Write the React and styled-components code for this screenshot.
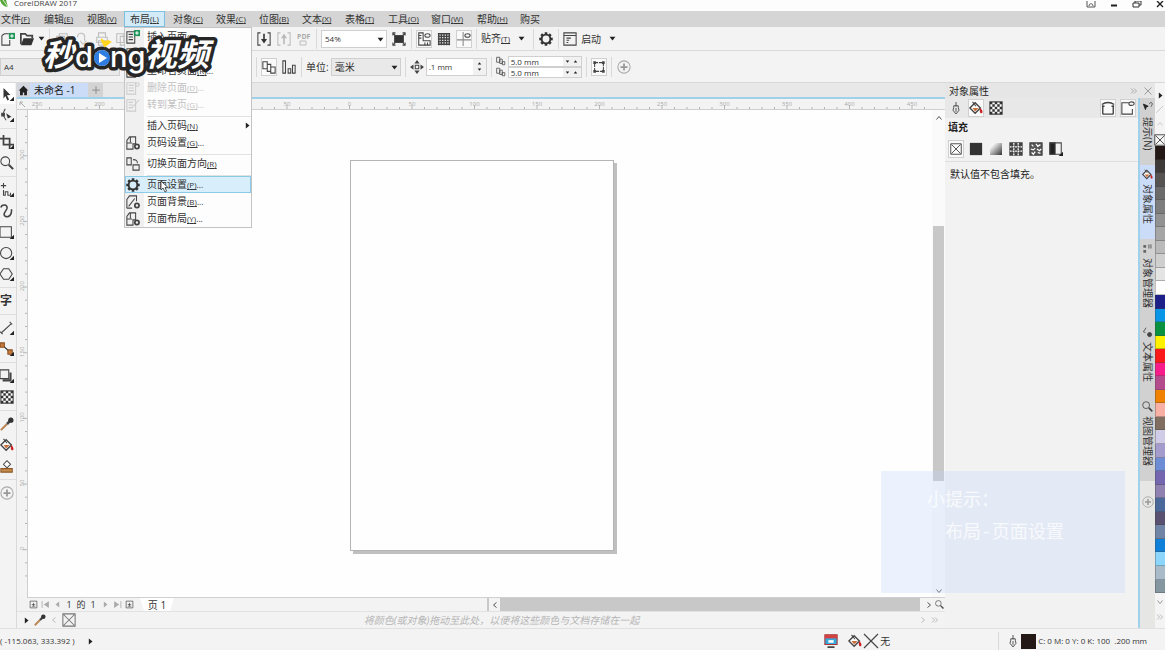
import React from 'react';
import styled, { createGlobalStyle, css } from 'styled-components';

const GlobalStyle = createGlobalStyle`
  *, *::before, *::after { box-sizing: border-box; }
  html, body { margin: 0; padding: 0; }
  body {
    font-family: "Open Sans", "Noto Sans CJK SC", sans-serif;
    font-size: 10px;
    line-height: 14px;
    color: #333;
    background: #f2f2f2;
    overflow: hidden;
  }
  button, input, select { font: inherit; color: inherit; margin: 0; padding: 0; border: 0; background: none; border-radius: 0; }
  svg { display: block; flex: none; }
`;

const line = '#d9d9d9';
const blue = '#9fd2ea';

const Window = styled.div`
  position: relative;
  display: flex;
  flex-direction: column;
  height: 100vh;
  min-height: 600px;
  white-space: nowrap;
  overflow: hidden;
`;

/* ---------- title ---------- */
const TitleBar = styled.header`
  display: flex;
  align-items: flex-start;
  height: 11px;
  background: #fdfdfd;
  overflow: hidden;
`;
const Title = styled.h1`
  margin: 0 auto 0 4px;
  font-size: 8px;
  line-height: 6px;
  font-weight: 400;
  color: #444;
`;
const WindowButtons = styled.div`
  display: flex;
  gap: 13px;
`;
const WindowButton = styled.button`
  width: 10px;
  height: 8px;
`;

/* ---------- menu bar ---------- */
const MenuBar = styled.nav`
  display: flex;
  gap: 2px;
  height: 16px;
  margin-left: -5px;
  background: #d5d5d5;
`;
const MenuSlot = styled.div`
  position: relative;
  flex: none;
  width: ${p => (p.$wide ? 44 : 41)}px;
`;
const MenuButton = styled.button`
  display: flex;
  align-items: center;
  width: 100%;
  height: 16px;
  padding-left: 5px;
  border: 1px solid ${p => (p.$open ? '#7dbfe0' : 'transparent')};
  background: ${p => (p.$open ? '#d3ebf8' : 'transparent')};
`;
const Key = styled.span`
  font-size: 8px;
  text-decoration: underline;
`;
const Dropdown = styled.div`
  position: absolute;
  z-index: 5;
  top: 16px;
  left: 0;
  width: 128px;
  border: 1px solid #c4c4c4;
  background: linear-gradient(90deg, #f0f0f0 19px, #fdfdfd 19px);
`;
const DropItem = styled.button`
  position: relative;
  display: flex;
  align-items: center;
  width: 100%;
  height: 17px;
  gap: 7px;
  padding-left: 1px;
  text-align: left;
  color: ${p => (p.$off ? '#c2c2c2' : '#333')};
  ${p => p.$on && css`background: #d9eefb; box-shadow: inset 0 0 0 1px #8ccbe8;`}
`;
const DropLabel = styled.span`
  flex: 1;
`;
const DropRule = styled.div`
  height: 4px;
  margin-left: 22px;
  border-bottom: 1px solid #e2e2e2;
`;
const Cursor = styled.svg`
  position: absolute;
  left: 35px;
  top: 4px;
`;

/* ---------- toolbars ---------- */
const Toolbar = styled.div`
  display: flex;
  align-items: center;
  gap: 4px;
  height: ${p => p.$h}px;
  background: #f3f3f3;
  border-bottom: 1px solid ${line};
`;
const LeadGroup = styled.div`
  display: flex;
  align-items: center;
  flex: none;
  gap: 4px;
  width: 252px;
  height: 100%;
  border-right: 1px solid ${line};
`;
const ToolButton = styled.button`
  display: flex;
  align-items: center;
  justify-content: center;
  flex: none;
  gap: 4px;
  min-width: 16px;
  height: 18px;
  opacity: ${p => (p.$off ? 0.3 : 1)};
  ${p => p.$on && css`background: #fafafa; box-shadow: inset 0 0 0 1px #d0d0d0;`}
`;
const MenuTool = styled(ToolButton)`
  padding-right: 4px;
  svg:last-child { margin-left: 4px; }
`;
const Rule = styled.span`
  flex: none;
  width: 1px;
  height: 20px;
  background: ${line};
`;
const SelectBox = styled.span`
  position: relative;
  flex: none;
  width: ${p => p.$w}px;
  height: 18px;
  select {
    appearance: none;
    width: 100%;
    height: 18px;
    padding-left: 3px;
    border: 1px solid #cfcfcf;
    font-size: ${p => (p.$small ? 8 : 10)}px;
    background: ${p => (p.$white ? '#fff' : '#e9e9e9')};
  }
  svg { position: absolute; right: 3px; top: 7px; pointer-events: none; }
`;
const Field = styled.label`
  display: flex;
  align-items: center;
  gap: 2px;
`;
const Spin = styled.span`
  display: flex;
  height: ${p => (p.$thin ? 11 : 18)}px;
  border: 1px solid #d0d0d0;
  background: #f1f1f1;
  input {
    width: ${p => (p.$thin ? 54 : 46)}px;
    height: 100%;
    padding-left: 2px;
    font-size: 8px;
    background: #fff;
  }
`;
const Arrows = styled.span`
  display: flex;
  flex-direction: ${p => (p.$row ? 'row' : 'column')};
  align-items: center;
  justify-content: space-evenly;
  width: ${p => (p.$row ? 18 : 13)}px;
`;
const Stack = styled.div`
  display: flex;
  flex-direction: column;
`;

/* ---------- work area ---------- */
const Main = styled.main`
  display: flex;
  flex: 1;
  min-height: 0;
`;
const Toolbox = styled.aside`
  flex: none;
  width: 17px;
  background: #f3f3f3;
  border-right: 1px solid ${line};
`;
const ToolGroup = styled.div`
  display: flex;
  flex-direction: column;
  & + & { margin-top: 3px; padding-top: 2px; border-top: 1px solid #dedede; }
`;
const Tool = styled.button`
  display: flex;
  align-items: center;
  width: 15px;
  height: 21px;
  background: ${p => (p.$on ? '#fff' : 'transparent')};
  b { font-size: 12px; }
`;
const Doc = styled.section`
  display: flex;
  flex-direction: column;
  flex: 1;
  min-width: 0;
`;
const DocTabs = styled.div`
  display: flex;
  height: 16px;
  background: #e8e8e8;
  border-bottom: 2px solid ${blue};
`;
const DocTab = styled.button`
  display: flex;
  align-items: center;
  justify-content: center;
  width: ${p => p.$w}px;
  height: 14px;
  color: #222;
  background: ${p => p.$bg};
  span { flex: 1; padding-left: 4px; text-align: left; }
`;
const RulerTop = styled.div`
  display: flex;
  height: 11px;
  overflow: hidden;
  background: #f3f3f3;
  border-bottom: 1px solid #cfcfcf;
`;
const Middle = styled.div`
  display: flex;
  flex: 1;
  min-height: 0;
`;
const RulerSide = styled.div`
  flex: none;
  width: 11px;
  overflow: hidden;
  background: #f3f3f3;
  border-right: 1px solid #cfcfcf;
`;
const Canvas = styled.div`
  display: flex;
  align-items: center;
  justify-content: center;
  flex: 1;
  padding: 2px 0 0 3px;
  background: #fefefe;
`;
const Paper = styled.div`
  width: 264px;
  height: 391px;
  background: #fefefe;
  border: 1px solid #b4b4b4;
  box-shadow: 3px 3px 0 #c0c0c0;
`;
const ScrollSide = styled.div`
  display: flex;
  flex-direction: column;
  align-items: center;
  flex: none;
  width: 13px;
  padding: 2px 1px;
  background: #fafafa;
`;
const ScrollButton = styled.button`
  display: flex;
  align-items: center;
  justify-content: center;
  flex: none;
  width: 11px;
  height: 11px;
`;
const Gap = styled.span`
  flex: ${p => p.$grow};
`;
const Thumb = styled.span`
  flex: ${p => p.$grow};
  align-self: stretch;
  background: #c8c8c8;
`;
const PageNav = styled.div`
  display: flex;
  flex: none;
  align-items: center;
  height: 13px;
  margin-left: 11px;
  background: #f3f3f3;
  box-shadow: 0 -1px 0 #d0d0d0;
`;
const NavGroup = styled.div`
  display: flex;
  align-items: center;
  gap: 2px;
  width: 461px;
  height: 100%;
  border-right: 2px solid #c9c9c9;
  font-size: 9px;
`;
const NavButton = styled.button`
  display: flex;
  justify-content: center;
  width: 10px;
`;
const NavNumber = styled.span`
  width: 10px;
  text-align: center;
`;
const PageTab = styled.button`
  display: flex;
  align-items: center;
  justify-content: center;
  width: 34px;
  height: 13px;
  margin-left: 4px;
  font-size: 10px;
  background: #fff;
  clip-path: polygon(0 0, 100% 0, 88% 100%, 12% 100%);
`;
const ColorHint = styled.div`
  display: flex;
  flex: none;
  align-items: center;
  gap: 4px;
  height: 17px;
  padding: 0 6px;
  border-top: 1px solid #e2e2e2;
  background: #f3f3f3;
`;
const HintText = styled.p`
  flex: 1;
  margin: 0;
  padding-left: 8px;
  text-align: center;
  font-style: italic;
  color: #b5b5b5;
`;

/* ---------- docker ---------- */
const Docker = styled.aside`
  display: flex;
  flex-direction: column;
  flex: none;
  width: 210px;
  background: #f2f2f2;
`;
const DockerTitle = styled.header`
  display: flex;
  align-items: center;
  gap: 6px;
  height: 15px;
  padding: 0 3px 0 4px;
  background: #e6e6e6;
  h2 { flex: 1; margin: 0; font-size: 10px; font-weight: 400; color: #222; }
`;
const DockerBody = styled.div`
  display: flex;
  flex: 1;
  min-height: 0;
`;
const Panel = styled.div`
  flex: 1;
  border-right: 2px solid ${blue};
`;
const PanelTools = styled.div`
  display: flex;
  align-items: center;
  gap: 4px;
  height: 20px;
  padding: 0 2px 0 3px;
  background: #e8e8e8;
`;
const PanelSection = styled.div`
  display: flex;
  flex-direction: column;
  gap: 5px;
  padding: 1px 3px 3px;
  border-bottom: 1px solid #dedede;
  h3 { margin: 0; font-size: 10px; line-height: 16px; color: #222; }
`;
const Fills = styled.div`
  display: flex;
  gap: 4px;
`;
const PanelText = styled.p`
  margin: 5px;
  color: #222;
`;
const SideTabs = styled.div`
  flex: none;
  width: 15px;
  background: #e6e6e4;
`;
const SideTab = styled.button`
  display: flex;
  flex-direction: column;
  align-items: center;
  width: 15px;
  gap: 4px;
  padding: 4px 0 15px;
  background: ${p => (p.$on ? '#cbdcf8' : '#d1d1d1')};
  span { writing-mode: vertical-rl; text-orientation: sideways; line-height: 15px; color: #333; }
`;
const AddTab = styled.button`
  display: flex;
  align-items: center;
  justify-content: center;
  width: 15px;
  height: 42px;
`;

/* ---------- colour palette ---------- */
const Palette = styled.aside`
  display: flex;
  flex-direction: column;
  flex: none;
  width: 10px;
  background: #f4f4f4;
`;
const PaletteHead = styled.div`
  display: flex;
  flex-direction: column;
  align-items: center;
  justify-content: space-between;
  flex: none;
  height: ${p => p.$h}px;
  padding: ${p => p.$pad}px 0 0;
`;
const Swatch = styled.button`
  flex: 1;
  min-height: 0;
  border: solid rgba(70, 70, 70, 0.35);
  border-width: 0 0 1px 1px;
  background: ${p => p.$c};
`;

/* ---------- status ---------- */
const StatusBar = styled.footer`
  display: flex;
  align-items: center;
  flex: none;
  height: 22px;
  padding: 3px 18px 0 0;
  border-top: 1px solid #e0e0e0;
  background: #f3f3f3;
  font-size: 8px;
`;
const Coordinates = styled.div`
  display: flex;
  align-items: center;
  gap: 12px;
  flex: 1;
`;
const FillStatus = styled.div`
  display: flex;
  align-items: center;
  gap: 1px;
  width: 175px;
  height: 18px;
  font-size: 10px;
  border-right: 1px solid ${line};
`;
const OutlineStatus = styled.div`
  display: flex;
  align-items: center;
  gap: 2px;
  padding-left: 8px;
`;
const InkBox = styled.span`
  width: 15px;
  height: 15px;
  background: #231815;
`;

/* ---------- overlays ---------- */
const Brand = styled.svg`
  position: absolute;
  z-index: 8;
  left: 36px;
  top: 32px;
`;
const Tip = styled.aside`
  position: absolute;
  z-index: 7;
  right: 40px;
  bottom: 57px;
  width: 244px;
  height: 122px;
  padding: 14px 0 0 46px;
  font-family: "Liberation Mono", "Noto Sans CJK SC", monospace;
  font-size: 18px;
  line-height: 32px;
  color: rgba(255, 255, 255, 0.75);
  background: rgba(195, 215, 252, 0.3);
  p { margin: 0; }
  p + p { padding-left: 18px; }
`;

/* ---------- drawings ---------- */
const G = ({ s = 14, children, c = '#444', w = 1.2 }) => (
  <svg width={s} height={s} viewBox="0 0 16 16" fill="none" stroke={c} strokeWidth={w} aria-hidden="true">
    {children}
  </svg>
);
const Down = ({ s = 7, r = 0, c = '#222' }) => (
  <svg width={s} height={s - 2} viewBox="0 0 8 6" aria-hidden="true" overflow="visible">
    <path d="M0.5 1h7L4 5.4z" fill={c} transform={`rotate(${r} 4 3)`} />
  </svg>
);
const Chev = ({ r = 0, c = '#555', double, s = 8 }) => (
  <G s={s} c={c} w={2}>
    <g transform={`rotate(${r} 8 8)`}>
      {double ? <path d="M2 3l5 5-5 5M8 3l5 5-5 5" /> : <path d="M5 3l6 5-6 5" />}
    </g>
  </G>
);
const Corner = () => <path d="M16 11v5h-5z" fill="#222" stroke="none" />;
const gearSpokes = [0, 45, 90, 135, 180, 225, 270, 315];
const checks = [0, 1, 2, 3, 4].flatMap(y => [0, 1, 2, 3, 4].filter(x => (x + y) % 2 === 0).map(x => `M${1 + x * 2.8} ${1 + y * 2.8}h2.8v2.8h-2.8z`)).join('');

const shapes = {
  newDoc: <><path d="M1 4l3-2h5M1 4v11h9V9" /><path d="M9 1h7v7H9z" fill="#22965a" stroke="none" /><path d="M12.5 2.5v4M10.5 4.5h4" stroke="#fff" /></>,
  folder: <><path d="M1 14V2h5l2 2h6v3" strokeWidth="2" /><path d="M1 15l3-8h12l-3 8z" fill="#333" stroke="none" /></>,
  save: <path d="M2 5h9v9H2zM5 5V2h9v9h-3M4 9h5" />,
  cloud: <path d="M3 6a4 4 0 018-1v5M6 10l3 4 4-4" />,
  print: <path d="M4 6V1h8v5M2 6h12v6H2zM4 10h8v5H4z" />,
  copy: <path d="M2 2h8v10H2zM6 5h8v10H6z" />,
  importFile: <><path d="M4 1H1v14h3M12 1h3v14h-3" /><path d="M8 2v8" strokeWidth="2" /><path d="M4.5 8h7L8 13z" fill="#333" stroke="none" /></>,
  exportFile: <><path d="M4 1H1v14h3M12 1h3v14h-3" /><path d="M8 14V6" strokeWidth="2" /><path d="M4.5 7h7L8 2z" fill="#333" stroke="none" /></>,
  full: <><path d="M3 4h10v8H3z" fill="#333" /><path d="M1 4V1h3M12 1h3v3M15 12v3h-3M4 15H1v-3M1 1l3 3M15 1l-3 3M1 15l3-3M15 15l-3-3" /></>,
  rulers: <><path d="M2 1v14h13v-5H7V1z" /><path d="M2 4h3M2 7h3M9 15v-3M12 15v-3" /><ellipse cx="12" cy="4" rx="3" ry="2" /></>,
  grid: <path d="M1 2h14M1 5h14M1 8h14M1 11h14M1 14h14M2 1v14M5 1v14M8 1v14M11 1v14M14 1v14" strokeWidth="1.6" />,
  guides: <><path d="M7 0v16M0 9h16" stroke="#888" /><ellipse cx="12" cy="4" rx="3" ry="2" /></>,
  gear: <><circle cx="8" cy="8" r="5" strokeWidth="2.2" stroke="#333" />{gearSpokes.map(a => <path key={a} d="M8 0.3v3" stroke="#333" strokeWidth="3" transform={`rotate(${a} 8 8)`} />)}</>,
  launch: <><path d="M1 1h14v14H1zM1 4h14" /><path d="M4 7h5M4 9.5h3M4 12h2" /></>,
  pages: <path d="M1 2h5v8H1zM6 5h4v8H6zM10 8h5v7h-5z" />,
  bars: <path d="M1 1h3v14H1zM7 10h3v5H7zM12 6h3v9h-3z" />,
  nudge: <><path d="M8 0l3 4H5zM8 16l3-4H5zM0 8l4-3v6zM16 8l-4-3v6z" fill="#444" stroke="none" /><path d="M6 6h4v4H6z" /></>,
  dupe: <path d="M1 2h5v8H1zM6 5h4v7H6zM10 9h4v5h-4z" />,
  bounds: <><path d="M3 3h10v10H3z" strokeDasharray="4 1" /><path d="M1.5 1.5h3v3h-3zM11.5 1.5h3v3h-3zM1.5 11.5h3v3h-3zM11.5 11.5h3v3h-3z" fill="#444" stroke="none" /></>,
  plus: <><circle cx="8" cy="8" r="7" stroke="#aaa" /><path d="M8 4v8M4 8h8" stroke="#999" strokeWidth="2" /></>,
  pointer: <><path d="M4 1l8 8-4 .4 2.4 5-2 1-2.2-5L4 13z" fill="#333" stroke="none" /><Corner /></>,
  shape: <><path d="M6 1C3 5 3 9 7 14" /><path d="M7 6l6 4-4 2z" fill="#333" stroke="none" /><path d="M2 6h3v3H2z" fill="#444" /><Corner /></>,
  crop: <><path d="M4 0v11h12M0 4h11v12" strokeWidth="2" /><Corner /></>,
  zoom: <><circle cx="6" cy="6" r="5" /><path d="M10 10l5 5" strokeWidth="2.4" /></>,
  freehand: <><path d="M4 0v6M1 3h6M4 8v6h2v-4h3v4h3v-3" /><Corner /></>,
  artistic: <path d="M1 4c1-4 8-4 7 1-1 4-6 6-2 9 4 2 8-2 7-8" strokeWidth="1.8" />,
  rect: <><path d="M0 2h13v12H0z" /><Corner /></>,
  ellipse: <><circle cx="7" cy="8" r="6.4" /><Corner /></>,
  polygon: <><path d="M4 2h6l4 6-4 6H4L0 8z" /><Corner /></>,
  lineTool: <><path d="M1 14L13 3M0 12l3 3M11 1l3 3" /><Corner /></>,
  connector: <><path d="M2 3l10 9" stroke="#222" /><path d="M0 1h5v5H0zM9 9h5v5H9z" fill="#c77b3c" stroke="#8a5022" /><Corner /></>,
  shadow: <><path d="M0 1h10v10H0z" /><path d="M12 4v9H3" strokeWidth="2.4" /><Corner /></>,
  checker: <><path d="M1 1h14v14H1z" fill="#fff" /><path d={checks} fill="#333" stroke="none" /></>,
  dropper: <><path d="M1 15l7-7" stroke="#b98454" strokeWidth="2.4" /><path d="M8 8l3-3" stroke="#444" strokeWidth="3" /><circle cx="12.4" cy="3.6" r="3" fill="#333" stroke="none" /></>,
  bucket: <><path d="M1 8l6-6 6 6-6 6z" fill="#fff" strokeWidth="1.6" /><path d="M4 8h7l-4 4z" fill="#c9703a" stroke="none" /><path d="M13 8c3 3 3 6 1 6s-2-3-1-6z" fill="#c22" stroke="none" /><path d="M4 1l4 5" /></>,
  smart: <><path d="M4 6l4-4 4 4-4 4z" fill="#fff" /><path d="M1 11h13v4H1z" fill="#c98d4e" stroke="#8a5a2a" /></>,
  none: <path d="M1 1h14v14H1zM2 2l12 12M14 2L2 14" />,
  cross: <path d="M1 1l14 14M15 1L1 15" />,
  solid: <path d="M1 1h14v14H1z" fill="#333" stroke="none" />,
  pattern: <><path d="M1 1h14v14H1z" fill="#444" /><path d="M1 5.5h14M1 10.5h14M5.5 1v14M10.5 1v14" stroke="#fff" strokeDasharray="2 1" strokeWidth="1.5" /></>,
  texture: <><path d="M1 1h14v14H1z" fill="#555" /><path d="M3 3l2 2M8 2l2 3 3-2M2 8l3 1 2-2M9 8l3 2 2-2M3 12l2 2 2-3M10 12l3 1" stroke="#fff" strokeWidth="1.4" /></>,
  postscript: <><path d="M1 1h13v13H1z" /><path d="M1 1h6v13H1z" fill="#222" /><Corner /></>,
  pen: <path d="M8 0v6M5 5h6v2l1 4-4 5-4-5 1-4zM8 8v5" />,
  wrap: <><path d="M2 15V5M14 15V5M1 4c4-3 10-3 14 0" strokeWidth="1.6" /><path d="M1 6h3M12 6h3M2 15h12" strokeWidth="1.6" /></>,
  pin: <><path d="M9 2H1v13h12V9" /><ellipse cx="12" cy="3" rx="3" ry="2" /></>,
  hintIcon: <><path d="M2 3l7 3-3 1.5L5 11z" fill="#222" stroke="#222" /><path d="M11 3c0-3 4-3 4 0 0 2-2 2-2 4" /></>,
  manager: <><path d="M2 3h4v4H2zM2 10h4v4H2z" fill="#666" stroke="none" /><path d="M10 2v6M13 2v6" /></>,
  textProps: <><path d="M2 7l4-6M2 7l3 1" /><circle cx="11" cy="11" r="3" fill="#444" /></>,
  insertPage: <><path d="M1 2h9v13H1zM3 5h5M3 8h5M3 11h5" /><path d="M9 0h7v7H9z" fill="#22965a" stroke="none" /><path d="M12.5 1.5v4M10.5 3.5h4" stroke="#fff" /></>,
  pageRow: <><path d="M1 2h10v13H1zM3 5h6M3 8h6M3 11h6" /><circle cx="13" cy="4" r="2" /></>,
  pageGo: <path d="M1 2h10v13H1zM3 5h5M3 8h5M3 11h5M8 10l7-8" />,
  pageGear: <><path d="M9 1H4L1 5v10h7V9h3V1zM1 8h6M5 1v6" /><circle cx="12.5" cy="12" r="2.4" strokeWidth="2" /></>,
  pageBack: <><path d="M1 15V5l3-4h8v6M1 15h6M3 13l7-9" /><circle cx="12.5" cy="12" r="2.4" strokeWidth="2" /></>,
  orient: <path d="M1 1h5v8H1zM8 9h7v6H8zM8 3c4 0 5 1 5 4" />,
  docPlus: <path d="M2 2h12v12H2zM5 8h6M8 5v6M5 11h6" />,
  screen: <><path d="M1 1h14v11H1z" fill="#35a8dc" stroke="#a33" /><path d="M1 1h14v4H1z" fill="#d34242" stroke="none" /><path d="M5 7h6v3H5z" fill="#fff" stroke="none" /><path d="M4 15h8" strokeWidth="2" /></>,
  home: <path d="M8 1l7 7h-2v7H9v-4H7v4H3V8H1z" fill="#222" stroke="none" />,
};
const Icon = ({ n, s, c }) => <G s={s} c={c}>{shapes[n]}</G>;

const TopScale = () => (
  <svg width="904" height="11" aria-hidden="true">
    {Array.from({ length: 72 }, (_, i) => (
      <path key={i} d={`M${9 + i * 12.5} ${i % 5 ? 8 : 6}V10`} stroke="#b5b5b5" />
    ))}
    {Array.from({ length: 15 }, (_, i) => (
      <text key={i} x={9 + i * 62.5} y="7" textAnchor="middle" fontSize="6" fill="#aaa">{Math.abs(i - 5) * 50}</text>
    ))}
  </svg>
);
const SideScale = () => (
  <svg width="11" height="488" aria-hidden="true">
    {Array.from({ length: 36 }, (_, i) => (
      <path key={i} d={`M${(i + 2) % 5 ? 8 : 6} ${6 + i * 13.13 + 0.4}H10`} stroke="#b5b5b5" />
    ))}
    {Array.from({ length: 7 }, (_, i) => (
      <text key={i} transform={`translate(7 ${45 + i * 65.6}) rotate(-90)`} textAnchor="middle" fontSize="6" fill="#aaa">{300 - i * 50}</text>
    ))}
  </svg>
);

const menus = [
  ['文件', 'F'], ['编辑', 'E'], ['视图', 'V'], ['布局', 'L'], ['对象', 'C'], ['效果', 'C'], ['位图', 'B'],
  ['文本', 'X'], ['表格', 'T'], ['工具', 'O'], ['窗口', 'W'], ['帮助', 'H'], ['购买', ''],
];
const layoutMenu = [
  { icon: 'insertPage', t: '插入页面', k: 'I', more: true },
  { icon: 'pageRow', t: '再制页面', k: 'D', more: true },
  { icon: 'pageRow', t: '重命名页面', k: 'R', more: true },
  { icon: 'pageRow', t: '删除页面', k: 'D', more: true, off: true },
  { icon: 'pageGo', t: '转到某页', k: 'G', more: true, off: true },
  null,
  { t: '插入页码', k: 'N', sub: true },
  { icon: 'pageGear', t: '页码设置', k: 'G', more: true },
  null,
  { icon: 'orient', t: '切换页面方向', k: 'R' },
  null,
  { icon: 'gear', t: '页面设置', k: 'P', more: true, on: true },
  { icon: 'pageBack', t: '页面背景', k: 'B', more: true },
  { icon: 'pageGear', t: '页面布局', k: 'Y', more: true },
];
const tools = [
  ['pointer', 'shape'], ['crop', 'zoom'], ['freehand', 'artistic', 'rect', 'ellipse', 'polygon'], ['text'],
  ['lineTool', 'connector'], ['shadow', 'checker'], ['dropper', 'bucket', 'smart'], ['plus'],
];
const sideTabs = [
  ['提示(N)', 'hintIcon'], ['对象属性', 'bucket', true], ['对象管理器', 'manager'], ['文本属性', 'textProps'], ['视图管理器', 'zoom'],
];
const colors = [
  '#231815', '#3e3a39', '#555453', '#6b6b6b', '#7d7d7d', '#929292', '#a6a6a6', '#bababa', '#cfcfcf', '#e4e4e4', '#ffffff',
  '#1d2088', '#0a96e8', '#0a9140', '#fff100', '#fa1818', '#f81c8a', '#b44b8c', '#f08200', '#f8b0a4', '#806e60', '#d0cce8',
  '#a59cce', '#6c8cd5', '#7566b0', '#8f82b0', '#4a6899', '#5a5070', '#7085a5', '#0f80d8', '#8cd5fb', '#a9bac9', '#8496a0',
];

function LayoutDropdown() {
  return (
    <Dropdown>
      {layoutMenu.map((m, i) => m === null ? <DropRule key={i} /> : (
        <DropItem key={i} $off={m.off} $on={m.on} disabled={m.off}>
          {m.icon ? <Icon n={m.icon} c={m.off ? '#ccc' : '#444'} /> : <G />}
          <DropLabel>{m.t}<Key>({m.k})</Key>{m.more && <small>...</small>}</DropLabel>
          {m.sub && <Down r={-90} />}
          {m.on && (
            <Cursor width="9" height="13" viewBox="0 0 9 13" aria-hidden="true">
              <path d="M1 1v9l2-2 2 4 1.6-.8L5 7.6h3z" fill="#fff" stroke="#333" strokeWidth="0.8" />
            </Cursor>
          )}
        </DropItem>
      ))}
    </Dropdown>
  );
}

export default function App() {
  return (
    <Window>
      <GlobalStyle />
      <TitleBar>
        <svg width="10" height="8" viewBox="0 0 10 8" aria-hidden="true"><path d="M0 0h6l2 7C4 7 1 4 0 0z" fill="#55a838" /><path d="M3 0l5 7" stroke="#dff0d0" /></svg>
        <Title>CorelDRAW 2017</Title>
        <WindowButtons>
          <WindowButton aria-label="账户"><svg width="10" height="7"><path d="M1 0v6h8V0M3 5c0-3 4-3 4 0" fill="none" stroke="#555" /></svg></WindowButton>
          <WindowButton aria-label="最小化"><svg width="10" height="7"><path d="M2 4.5h6" stroke="#222" strokeWidth="2" /></svg></WindowButton>
          <WindowButton aria-label="还原"><svg width="10" height="7"><path d="M1 2h6v4H1zM3 2V0h6v4H7" fill="none" stroke="#333" /></svg></WindowButton>
          <WindowButton aria-label="关闭"><svg width="10" height="7"><path d="M2 0l6 6M8 0L2 6" stroke="#222" strokeWidth="1.4" /></svg></WindowButton>
        </WindowButtons>
      </TitleBar>

      <MenuBar>
        {menus.map(([t, k]) => (
          <MenuSlot key={t} $wide={k === 'W'}>
            <MenuButton $open={k === 'L'}>{t}{k && <Key>({k})</Key>}</MenuButton>
            {k === 'L' && <LayoutDropdown />}
          </MenuSlot>
        ))}
      </MenuBar>

      <Toolbar $h={24}>
        <LeadGroup>
          <ToolButton aria-label="新建"><Icon n="newDoc" /></ToolButton>
          <ToolButton aria-label="打开"><Icon n="folder" /><Down /></ToolButton>
          <Rule />
          {['save', 'cloud', 'print', 'copy'].map(n => <ToolButton key={n} $off aria-label={n}><Icon n={n} /></ToolButton>)}
        </LeadGroup>
        <ToolButton aria-label="导入"><Icon n="importFile" /></ToolButton>
        <ToolButton aria-label="导出" $off><Icon n="exportFile" /></ToolButton>
        <ToolButton aria-label="发布为 PDF" $off>
          <svg width="14" height="14" aria-hidden="true"><text x="0" y="7" fontSize="7" fontWeight="700">PDF</text><path d="M3 9h6v4H3z" fill="none" stroke="#444" /></svg>
        </ToolButton>
        <Rule />
        <SelectBox $w={66} $small $white><select aria-label="缩放级别"><option>54%</option></select><Down /></SelectBox>
        <ToolButton aria-label="全屏预览"><Icon n="full" /></ToolButton>
        <Rule />
        <ToolButton $on aria-label="显示标尺"><Icon n="rulers" /></ToolButton>
        <ToolButton aria-label="显示网格"><Icon n="grid" /></ToolButton>
        <ToolButton $on aria-label="显示辅助线"><Icon n="guides" /></ToolButton>
        <Rule />
        <MenuTool><span>贴齐<Key>(T)</Key></span><Down /></MenuTool>
        <Rule />
        <ToolButton aria-label="选项"><Icon n="gear" /></ToolButton>
        <Rule />
        <MenuTool><Icon n="launch" /><span>启动</span><Down /></MenuTool>
      </Toolbar>

      <Toolbar $h={32}>
        <LeadGroup>
          <SelectBox $w={120} $small><select aria-label="页面大小"><option>A4</option></select><Down /></SelectBox>
        </LeadGroup>
        <Rule />
        <ToolButton $on aria-label="所有页面"><Icon n="pages" /></ToolButton>
        <ToolButton aria-label="当前页面"><Icon n="bars" /></ToolButton>
        <Rule />
        <Field>单位:<SelectBox $w={70}><select><option>毫米</option></select><Down /></SelectBox></Field>
        <Rule />
        <Field>
          <Icon n="nudge" />
          <Spin><input aria-label="微调距离" defaultValue=".1 mm" /><Arrows><Down s={5} r={180} /><Down s={5} /></Arrows></Spin>
        </Field>
        <Rule />
        <Stack>
          {['x', 'y'].map(a => (
            <Field key={a}>
              <Icon n="dupe" s={10} />
              <Spin $thin><input aria-label={`再制距离 ${a}`} defaultValue="5.0 mm" /><Arrows $row><Down s={5} /><Down s={5} r={180} /></Arrows></Spin>
            </Field>
          ))}
        </Stack>
        <Rule />
        <ToolButton $on aria-label="将所有对象视为已填充"><Icon n="bounds" /></ToolButton>
        <Rule />
        <ToolButton aria-label="快速自定义"><Icon n="plus" /></ToolButton>
      </Toolbar>

      <Main>
        <Toolbox>
          {tools.map(group => (
            <ToolGroup key={group[0]}>
              {group.map(n => (
                <Tool key={n} $on={n === 'pointer'} aria-label={n === 'text' ? undefined : n}>
                  {n === 'text' ? <b>字</b> : <Icon n={n} />}
                </Tool>
              ))}
            </ToolGroup>
          ))}
        </Toolbox>

        <Doc>
          <DocTabs>
            <DocTab $w={13} $bg="#d4d8de" aria-label="欢迎屏幕"><Icon n="home" s={11} /></DocTab>
            <DocTab $w={58} $bg="#cbdcf8"><span>未命名 -1</span></DocTab>
            <DocTab $w={15} $bg="#d3d3d3" aria-label="新文档"><G s={10} c="#999" w={2}><path d="M8 2v12M2 8h12" /></G></DocTab>
          </DocTabs>
          <RulerTop>
            <svg width="11" height="10" aria-hidden="true"><path d="M3 3l5 5M3 6V3h3" stroke="#aaa" fill="none" /></svg>
            <TopScale />
          </RulerTop>
          <Middle>
            <RulerSide><SideScale /></RulerSide>
            <Canvas><Paper /></Canvas>
            <ScrollSide>
              <ScrollButton aria-label="向上"><Chev r={-90} /></ScrollButton>
              <Gap $grow={103} /><Thumb $grow={256} /><Gap $grow={104} />
              <ScrollButton aria-label="向下"><Chev r={90} /></ScrollButton>
            </ScrollSide>
          </Middle>
          <PageNav>
            <NavGroup>
              <NavButton aria-label="在前添加页"><Icon n="docPlus" s={9} /></NavButton>
              <NavButton aria-label="首页"><G s={9} c="#999"><path d="M2 2v12" /><path d="M14 2v12L5 8z" fill="#aaa" stroke="none" /></G></NavButton>
              <NavButton aria-label="上一页"><Down r={90} c="#aaa" /></NavButton>
              <NavNumber>1</NavNumber><NavNumber>的</NavNumber><NavNumber>1</NavNumber>
              <NavButton aria-label="下一页"><Down r={-90} c="#aaa" /></NavButton>
              <NavButton aria-label="末页"><G s={9} c="#999"><path d="M14 2v12" /><path d="M2 2v12l9-6z" fill="#aaa" stroke="none" /></G></NavButton>
              <NavButton aria-label="在后添加页"><Icon n="docPlus" s={9} /></NavButton>
              <PageTab>页 1</PageTab>
            </NavGroup>
            <ScrollButton aria-label="向左"><Chev r={180} /></ScrollButton>
            <Thumb $grow={1} />
            <Gap $grow="0 0 3px" />
            <ScrollButton aria-label="向右"><Chev /></ScrollButton>
            <ScrollButton aria-label="导航器"><Icon n="zoom" s={9} /></ScrollButton>
          </PageNav>
          <ColorHint>
            <Down r={-90} /><Icon n="dropper" s={12} /><Chev r={180} c="#bbb" /><Icon n="none" c="#777" />
            <HintText>将颜色(或对象)拖动至此处，以便将这些颜色与文档存储在一起</HintText>
            <Chev c="#bbb" /><Chev double c="#bbb" />
          </ColorHint>
        </Doc>

        <Docker>
          <DockerTitle>
            <h2>对象属性</h2>
            <Chev double c="#aaa" /><G s={8} c="#888" w={1.6}>{shapes.cross}</G>
          </DockerTitle>
          <DockerBody>
            <Panel>
              <PanelTools>
                <ToolButton aria-label="轮廓"><Icon n="pen" s={12} /></ToolButton>
                <ToolButton $on aria-label="填充"><Icon n="bucket" /></ToolButton>
                <ToolButton aria-label="透明度"><Icon n="checker" /></ToolButton>
                <Gap $grow={1} />
                <ToolButton $on aria-label="环绕"><Icon n="wrap" /></ToolButton>
                <ToolButton $on aria-label="锁定"><Icon n="pin" /></ToolButton>
              </PanelTools>
              <PanelSection>
                <h3>填充</h3>
                <Fills>
                  <ToolButton $on aria-label="无填充"><Icon n="none" s={12} /></ToolButton>
                  <ToolButton aria-label="均匀填充"><Icon n="solid" /></ToolButton>
                  <ToolButton aria-label="渐变填充">
                    <svg width="14" height="14" aria-hidden="true"><defs><linearGradient id="fade" x2="1" y2="1"><stop offset="0.2" stopColor="#f4f4f4" /><stop offset="1" stopColor="#333" /></linearGradient></defs><path d="M1 1h12v12H1z" fill="url(#fade)" /></svg>
                  </ToolButton>
                  <ToolButton aria-label="图样填充"><Icon n="pattern" /></ToolButton>
                  <ToolButton aria-label="底纹填充"><Icon n="texture" /></ToolButton>
                  <ToolButton aria-label="双色填充"><Icon n="postscript" /></ToolButton>
                </Fills>
              </PanelSection>
              <PanelText>默认值不包含填充。</PanelText>
            </Panel>
            <SideTabs>
              {sideTabs.map(([t, n, on]) => (
                <SideTab key={t} $on={on}><Icon n={n} s={11} /><span>{t}</span></SideTab>
              ))}
              <AddTab aria-label="添加泊坞窗"><Icon n="plus" s={12} /></AddTab>
            </SideTabs>
          </DockerBody>
        </Docker>

        <Palette>
          <PaletteHead $h={63} $pad={10}>
            <Down r={-90} /><G s={10} c="#bbb"><path d="M2 14L13 3" /></G><Chev r={-90} c="#ccc" />
            <Icon n="none" s={12} />
          </PaletteHead>
          {colors.map(c => <Swatch key={c} $c={c} aria-label={c} />)}
          <PaletteHead $h={35} $pad={5}>
            <Chev r={90} c="#999" /><Chev double c="#bbb" /><span />
          </PaletteHead>
        </Palette>
      </Main>

      <StatusBar>
        <Coordinates>( -115.063, 333.392 )<Down r={-90} /></Coordinates>
        <FillStatus>
          <Icon n="screen" /><Gap $grow="0 0 8px" /><Icon n="bucket" /><Icon n="cross" s={16} /><span>无</span>
        </FillStatus>
        <OutlineStatus>
          <Icon n="pen" s={12} /><InkBox /><span>C: 0 M: 0 Y: 0 K: 100&nbsp; .200 mm</span>
        </OutlineStatus>
      </StatusBar>

      <Brand width="184" height="50" viewBox="0 0 184 50" role="img" aria-label="秒dong视频">
        <g fill="#fff" stroke="#262626" strokeWidth="7" strokeLinejoin="round" paintOrder="stroke">
          <text x="7" y="34" fontSize="31" fontStyle="italic" fontWeight="700" fontFamily="Noto Sans CJK SC">秒</text>
          <circle cx="66" cy="26" r="8" />
          <text x="109" y="34" fontSize="32" fontStyle="italic" fontWeight="700" fontFamily="Noto Sans CJK SC">视频</text>
          <text x="39" y="35" fontSize="29" fontFamily="Inter" fontWeight="500">d</text>
          <text x="74" y="35" fontSize="29" fontFamily="Inter" fontWeight="500">ng</text>
        </g>
        <circle cx="66" cy="26" r="8" fill="#2f7de0" />
        <path d="M63 21l8 5-8 5z" fill="#fff" />
        <path d="M66 9l3 5 5-4-2-1-3 1-3-2z" fill="#ffd51e" stroke="#ffd51e" strokeWidth="2" />
      </Brand>

      <Tip>
        <p>小提示：</p>
        <p>布局-页面设置</p>
      </Tip>
    </Window>
  );
}
